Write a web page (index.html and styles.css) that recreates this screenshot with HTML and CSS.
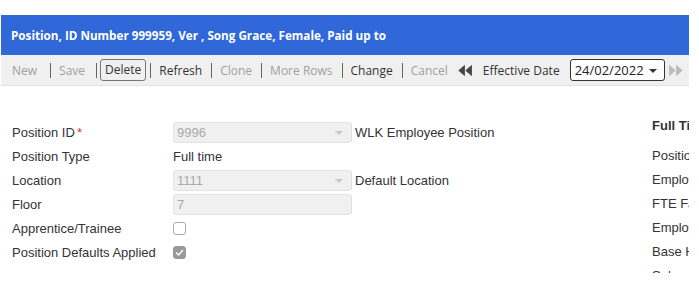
FILE: index.html
```html
<!DOCTYPE html>
<html lang="en">
<head>
  <meta charset="UTF-8" />
  <title>Position</title>
  <link rel="stylesheet" href="styles.css">
</head>
<body>

  <div class="panel">
    <!-- Title bar -->
    <div class="titlebar">Position, ID Number 999959, Ver , Song Grace, Female, Paid up to</div>

    <!-- Toolbar -->
    <div class="toolbar">
      <span class="tool off first">New</span><span class="sep"></span>
      <span class="tool off second">Save</span><span class="sep"></span>
      <span class="tool boxed">Delete</span><span class="sep"></span>
      <span class="tool">Refresh</span><span class="sep"></span>
      <span class="tool off">Clone</span><span class="sep"></span>
      <span class="tool off">More Rows</span><span class="sep"></span>
      <span class="tool">Change</span><span class="sep"></span>
      <span class="tool off">Cancel</span>
      <svg class="arrows prev" width="14" height="11" viewBox="0 0 14 11"><path d="M6.5 0.5 L0.8 5.5 L6.5 10.5 Z M13.5 0.5 L7.8 5.5 L13.5 10.5 Z" fill="#444" stroke="#444" stroke-width="0.8" stroke-linejoin="round"/></svg>
      <span class="tool eff">Effective Date</span>
      <div class="datebox">24/02/2022<span class="caret"></span></div>
      <svg class="arrows next" width="14" height="11" viewBox="0 0 14 11"><path d="M0.5 0.5 L6.2 5.5 L0.5 10.5 Z M7.5 0.5 L13.2 5.5 L7.5 10.5 Z" fill="#bbb" stroke="#bbb" stroke-width="0.8" stroke-linejoin="round"/></svg>
    </div>

    <!-- Form -->
    <div class="content">
      <div class="body">
        <div class="form">
          <div class="row">
            <label>Position ID<span class="req">*</span></label>
            <div class="field select">9996</div>
            <span class="desc">WLK Employee Position</span>
          </div>
          <div class="row">
            <label>Position Type</label>
            <span class="value">Full time</span>
          </div>
          <div class="row">
            <label>Location</label>
            <div class="field select">1111</div>
            <span class="desc">Default Location</span>
          </div>
          <div class="row">
            <label>Floor</label>
            <div class="field">7</div>
          </div>
          <div class="row">
            <label>Apprentice/Trainee</label>
            <span class="check"></span>
          </div>
          <div class="row">
            <label>Position Defaults Applied</label>
            <span class="check on">
              <svg width="9" height="7" viewBox="0 0 9 7"><path d="M1 3.5 L3.5 6 L8 1" fill="none" stroke="#fff" stroke-width="1.4"/></svg>
            </span>
          </div>
        </div>

        <div class="side">
          <div class="side-title">Full Time Equivalent</div>
          <div class="side-row">Position Hours</div>
          <div class="side-row">Employee Hours</div>
          <div class="side-row">FTE Factor</div>
          <div class="side-row">Employee FTE</div>
          <div class="side-row">Base Hours</div>
          <div class="side-row">Salary</div>
        </div>
      </div>
    </div>
  </div>

</body>
</html>
```

FILE: styles.css
```css
* {
  margin: 0;
  padding: 0;
  box-sizing: border-box;
}

body {
  background: #fff;
  font-family: 'Liberation Sans', Arial, sans-serif;
  font-size: 13px;
  color: #333;
  overflow: hidden;
}

.panel {
  margin-top: 15px;
  margin-left: 1px;
  width: 688px;
  overflow: hidden;
}

.titlebar {
  height: 40px;
  background: #3068da;
  color: #fff;
  font-family: 'Open Sans', sans-serif;
  font-weight: bold;
  font-size: 11.7px;
  line-height: 40px;
  padding-left: 10px;
  white-space: nowrap;
}

.toolbar {
  height: 31px;
  background: #f0f0f0;
  border-bottom: 1px solid #e2e2e2;
  display: flex;
  align-items: center;
  padding-left: 11px;
  font-family: 'Open Sans', sans-serif;
  font-size: 12px;
  white-space: nowrap;
}

.toolbar > * {
  flex-shrink: 0;
}

.tool {
  color: #333;
}

.tool.off {
  color: #a0a0a0;
}

.tool.first {
  padding-right: 4px;
}

.tool.second {
  padding-right: 2px;
}

.tool.boxed {
  border: 1px solid #777;
  border-radius: 3px;
  padding: 0 4px;
  height: 22px;
  line-height: 20px;
  margin: 0 -5px;
}

.sep {
  width: 1px;
  height: 15px;
  background: #666;
  margin: 0 8px 0 9px;
}

.arrows.prev {
  margin: 0 11px 0 10px;
}

.tool.eff {
  margin-right: 10px;
}

.datebox {
  width: 95px;
  height: 22px;
  border: 1px solid #333;
  border-radius: 3px;
  background: #fff;
  color: #222;
  font-size: 13px;
  line-height: 20px;
  padding-left: 4px;
  position: relative;
}

.caret {
  position: absolute;
  right: 7px;
  top: 9px;
  border-left: 4px solid transparent;
  border-right: 4px solid transparent;
  border-top: 4px solid #333;
}

.arrows.next {
  margin-left: 4px;
}

.content {
  border-left: 1px solid #e0e0e0;
  margin-left: -1px;
  height: 197px;
}

.body {
  display: flex;
  height: 187px;
  overflow: hidden;
  padding-top: 34px;
}

.form {
  width: 651px;
  flex-shrink: 0;
  padding-left: 11px;
}

.row {
  display: flex;
  align-items: center;
  height: 24px;
}

.row label {
  width: 161px;
  flex-shrink: 0;
}

.req {
  color: #e03030;
  margin-left: 2px;
}

.field {
  width: 179px;
  height: 21px;
  background: #f0f0f0;
  border: 1px solid #e2e2e2;
  border-radius: 3px;
  color: #aaa;
  line-height: 19px;
  padding-left: 3px;
  position: relative;
}

.field.select::after {
  content: '';
  position: absolute;
  right: 8px;
  top: 8px;
  border-left: 4px solid transparent;
  border-right: 4px solid transparent;
  border-top: 4px solid #c8c8c8;
}

.desc {
  margin-left: 3px;
}

.check {
  width: 13px;
  height: 13px;
  border: 1px solid #aaa;
  border-radius: 3px;
  background: #fff;
  display: flex;
  align-items: center;
  justify-content: center;
}

.check.on {
  background: #999;
  border-color: #999;
}

.side {
  white-space: nowrap;
}

.side-title {
  font-weight: bold;
  height: 28px;
  line-height: 20px;
  margin-top: -4px;
}

.side-row {
  height: 24px;
  line-height: 24px;
}
```
